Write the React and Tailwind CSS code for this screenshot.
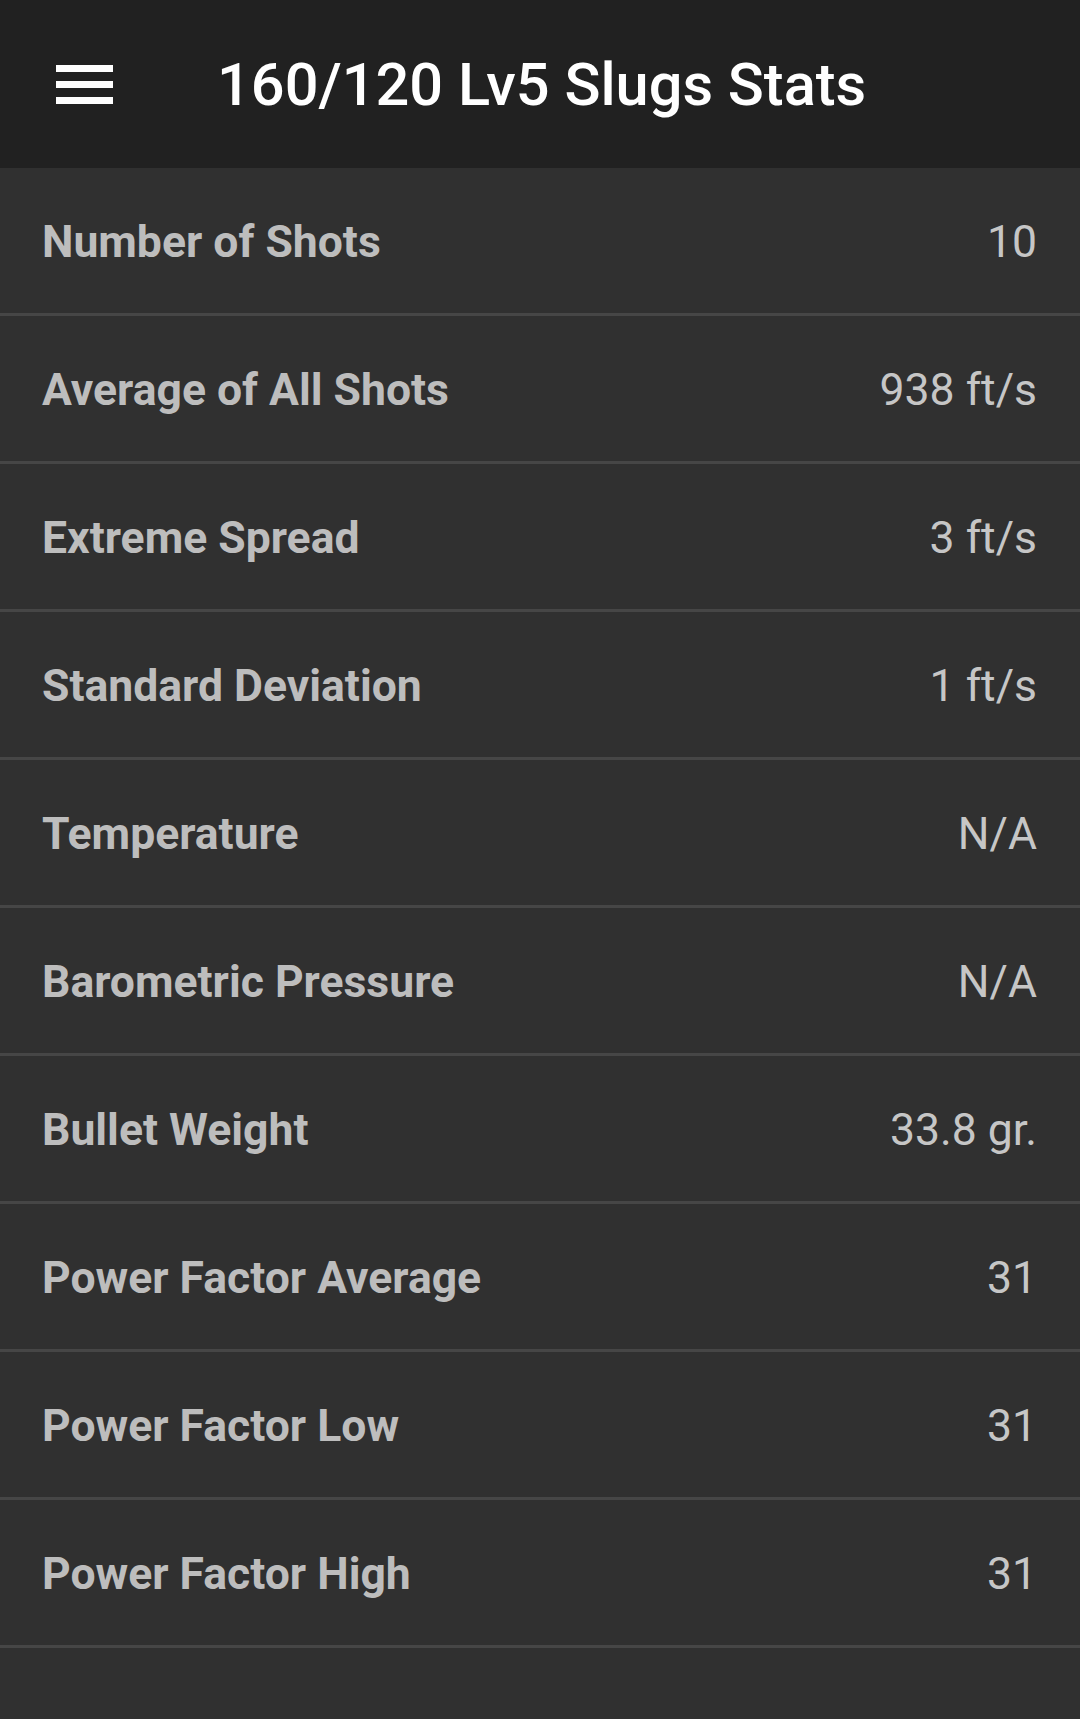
const stats = [
  { label: 'Number of Shots', value: '10' },
  { label: 'Average of All Shots', value: '938 ft/s' },
  { label: 'Extreme Spread', value: '3 ft/s' },
  { label: 'Standard Deviation', value: '1 ft/s' },
  { label: 'Temperature', value: 'N/A' },
  { label: 'Barometric Pressure', value: 'N/A' },
  { label: 'Bullet Weight', value: '33.8 gr.' },
  { label: 'Power Factor Average', value: '31' },
  { label: 'Power Factor Low', value: '31' },
  { label: 'Power Factor High', value: '31' },
]

function MenuIcon() {
  return (
    <svg width="57" height="39" viewBox="0 0 57 39" className="block">
      <rect x="0" y="0" width="57" height="7" fill="#ffffff" />
      <rect x="0" y="16" width="57" height="7" fill="#ffffff" />
      <rect x="0" y="32" width="57" height="7" fill="#ffffff" />
    </svg>
  )
}

export default function App() {
  return (
    <div className="w-[1080px] min-h-[1719px] bg-[#303030] font-['Roboto','Liberation_Sans',sans-serif]">
      {/* Toolbar */}
      <header className="h-[168px] bg-[#212121] flex items-center pl-[56px]">
        <button className="p-0">
          <MenuIcon />
        </button>
        <h1 className="ml-[104px] mt-[4px] text-[59.5px] font-medium text-white leading-none">
          160/120 Lv5 Slugs Stats
        </h1>
      </header>

      {/* Stats list */}
      <ul>
        {stats.map(({ label, value }) => (
          <li
            key={label}
            className="h-[148px] flex items-center justify-between pl-[42px] pr-[43px] pt-[4px] border-b-[3px] border-[#464646]"
          >
            <span className="text-[44.5px] font-bold text-[#bdbdbd]">{label}</span>
            <span className="text-[44.5px] text-[#c6c6c6]">{value}</span>
          </li>
        ))}
      </ul>
    </div>
  )
}
